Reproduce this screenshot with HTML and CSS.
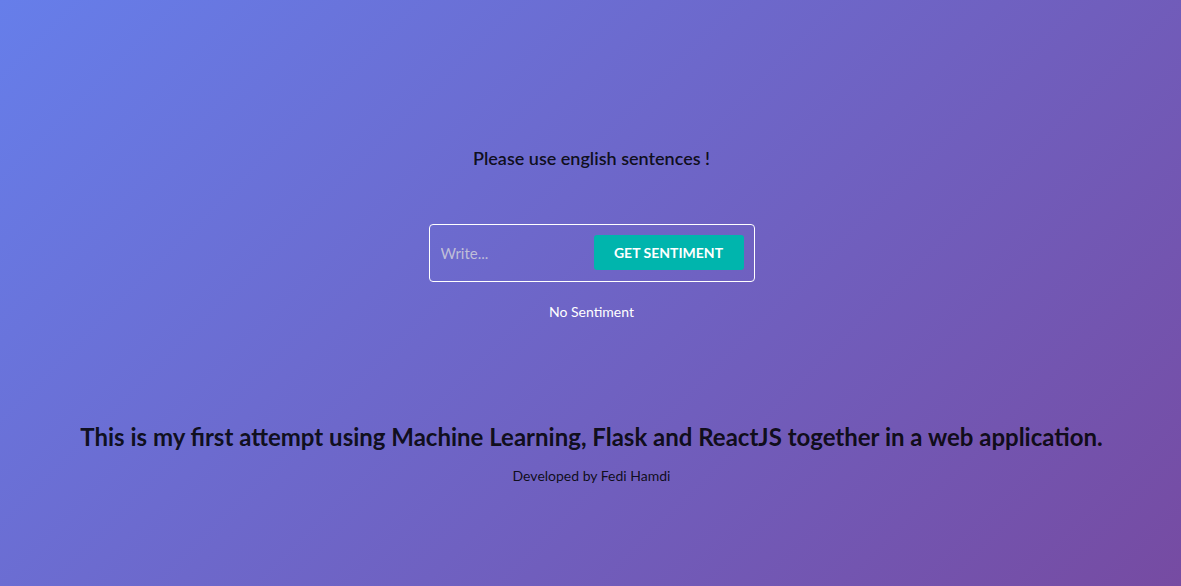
FILE: index.html
```html
<!DOCTYPE html>
<html>
<head>
<meta charset="utf-8">
<link rel="stylesheet" href="styles.css">
</head>
<body>
<main class="page">
  <h3 class="prompt">Please use english sentences !</h3>
  <form class="search">
    <input class="search-input" type="text" placeholder="Write...">
    <button class="search-btn" type="button">GET SENTIMENT</button>
  </form>
  <p class="result">No Sentiment</p>
  <h2 class="about">This is my first attempt using Machine Learning, Flask and ReactJS together in a web application.</h2>
  <p class="credit">Developed by Fedi Hamdi</p>
</main>
</body>
</html>
```
FILE: styles.css
```css
html, body {
  margin: 0;
  padding: 0;
  height: 100%;
}
body {
  font-family: Lato, "Open Sans", sans-serif;
  background: linear-gradient(135deg, #667eea 0%, #764ba2 100%);
  color: rgba(0,0,0,0.87);
  overflow: hidden;
}
.page {
  display: flex;
  flex-direction: column;
  align-items: center;
  padding-top: 146px;
  padding-left: 2px;
}
.prompt {
  margin: 0;
  font-size: 18px;
  font-weight: 600;
  line-height: 24px;
}
.search {
  margin: 54px 0 0;
  width: 326px;
  height: 58px;
  box-sizing: border-box;
  border: 1px solid #fff;
  border-radius: 4px;
  display: flex;
  align-items: center;
  padding: 0 10px 0 11px;
}
.search-input {
  flex: 1;
  min-width: 0;
  background: transparent;
  border: none;
  outline: none;
  font-family: inherit;
  font-size: 15px;
  color: #fff;
  padding: 0;
}
.search-input::placeholder {
  color: rgba(220,220,220,0.75);
}
.search-btn {
  width: 150px;
  height: 35px;
  border: none;
  border-radius: 3px;
  background: #00b5ad;
  color: #fff;
  font-family: inherit;
  font-weight: 700;
  font-size: 14px;
  cursor: pointer;
  margin-top: -1px;
}
.result {
  margin: 20px 0 0;
  font-size: 14px;
  line-height: 20px;
  color: #fff;
}
.about {
  margin: 99px 0 0;
  font-size: 24px;
  font-weight: 700;
  line-height: 32px;
}
.credit {
  margin: 14px 0 0;
  font-size: 14px;
  line-height: 18px;
}
```
